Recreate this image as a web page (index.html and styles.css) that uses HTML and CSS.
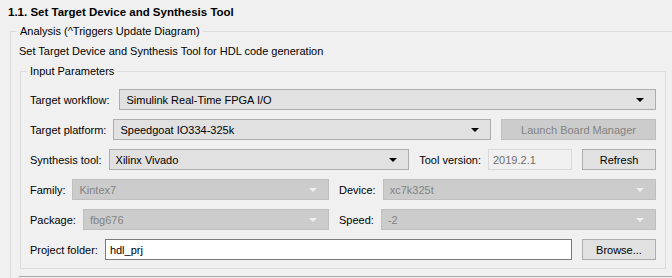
FILE: index.html
```html
<!DOCTYPE html>
<html>
<head>
<meta charset="utf-8">
<link rel="stylesheet" href="styles.css">
</head>
<body>
<div class="page">
  <div class="title">1.1. Set Target Device and Synthesis Tool</div>
  <fieldset class="group outer">
    <legend>Analysis (^Triggers Update Diagram)</legend>
    <div class="desc">Set Target Device and Synthesis Tool for HDL code generation</div>
    <fieldset class="group inner">
      <legend>Input Parameters</legend>
      <div class="rows">
        <div class="row">
          <span class="lbl wf">Target workflow:</span>
          <div class="select"><span class="val">Simulink Real-Time FPGA I/O</span><span class="arrow"></span></div>
        </div>
        <div class="row">
          <span class="lbl">Target platform:</span>
          <div class="select"><span class="val">Speedgoat IO334-325k</span><span class="arrow"></span></div>
          <div class="btn disabled launch">Launch Board Manager</div>
        </div>
        <div class="row">
          <span class="lbl">Synthesis tool:</span>
          <div class="select"><span class="val">Xilinx Vivado</span><span class="arrow"></span></div>
          <span class="lbl lbl-mid">Tool version:</span>
          <div class="input ro">2019.2.1</div>
          <div class="btn small">Refresh</div>
        </div>
        <div class="row split">
          <div class="half left">
            <span class="lbl">Family:</span>
            <div class="select disabled"><span class="val">Kintex7</span><span class="arrow"></span></div>
          </div>
          <div class="half right">
            <span class="lbl">Device:</span>
            <div class="select disabled"><span class="val">xc7k325t</span><span class="arrow"></span></div>
          </div>
        </div>
        <div class="row split">
          <div class="half left">
            <span class="lbl">Package:</span>
            <div class="select disabled"><span class="val">fbg676</span><span class="arrow"></span></div>
          </div>
          <div class="half right">
            <span class="lbl">Speed:</span>
            <div class="select disabled"><span class="val">-2</span><span class="arrow"></span></div>
          </div>
        </div>
        <div class="row">
          <span class="lbl">Project folder:</span>
          <div class="input edit">hdl_prj</div>
          <div class="btn small">Browse...</div>
        </div>
      </div>
    </fieldset>
    <div class="next-section"></div>
  </fieldset>
</div>
</body>
</html>
```
FILE: styles.css
```css
html, body {
  margin: 0;
  padding: 0;
  background: #f0f0f0;
  overflow: hidden;
}
body {
  font-family: "Liberation Sans", Arial, sans-serif;
  font-size: 11px;
  color: #000;
  width: 672px;
  height: 278px;
}
.page {
  padding: 5px 0 0 8px;
}
.title {
  font-weight: bold;
  font-size: 11.5px;
  height: 15px;
  line-height: 15px;
}
.group {
  border: 1px solid #dcdcdc;
  margin: 0;
  padding: 0;
  min-width: 0;
}
.group > legend {
  padding: 0 3px;
  margin-left: 6px;
  line-height: 14px;
}
.outer {
  margin: 4px -20px 0 2px;
  border-right: none;
  border-bottom: none;
  padding: 6px 0 0 0;
}
.desc {
  padding-left: 8px;
  line-height: 14px;
}
.inner {
  margin: 6px 6px 0 9px;
  width: 646px;
  box-sizing: border-box;
  padding: 11px 9px 8px 9px;
}
.inner > legend {
  margin-left: -3px;
}
.next-section {
  margin: 7px 0 0 8px;
  border-top: 1px solid #a9a9a9;
  height: 10px;
}
.rows {
  display: flex;
  flex-direction: column;
  gap: 9px;
}
.row {
  display: flex;
  align-items: center;
  height: 21px;
  gap: 10px;
}
.row > .lbl:first-child {
  margin-right: -3px;
}
.row > .lbl.wf {
  margin-right: 0;
}
.lbl {
  white-space: nowrap;
}
.lbl-mid {
  margin-right: -3px;
}
.select {
  flex: 1;
  height: 21px;
  box-sizing: border-box;
  border: 1px solid #adadad;
  background: #e1e1e1;
  display: flex;
  align-items: center;
  padding: 0 11px 0 6px;
}
.select .val {
  flex: 1;
  white-space: nowrap;
}
.arrow {
  width: 0;
  height: 0;
  border-left: 4px solid transparent;
  border-right: 4px solid transparent;
  border-top: 4px solid #000;
}
.select.disabled {
  background: #cccccc;
  border-color: #bfbfbf;
  color: #838383;
}
.select.disabled .arrow {
  border-top-color: #f0f0f0;
}
.btn {
  height: 21px;
  box-sizing: border-box;
  border: 1px solid #adadad;
  background: #e1e1e1;
  display: flex;
  align-items: center;
  justify-content: center;
  white-space: nowrap;
}
.btn.disabled {
  background: #cccccc;
  border-color: #bfbfbf;
  color: #838383;
}
.launch {
  width: 155px;
}
.small {
  width: 74px;
}
.input {
  height: 21px;
  box-sizing: border-box;
  display: flex;
  align-items: center;
  padding: 0 4px;
  white-space: nowrap;
}
.input.ro {
  width: 84px;
  border: 1px solid #d9d9d9;
  background: #f0f0f0;
  color: #6d6d6d;
}
.input.edit {
  flex: 1;
  border: 1px solid #7a7a7a;
  background: #fff;
}
.split {
  gap: 10px;
}
.half {
  display: flex;
  align-items: center;
  gap: 7px;
  height: 21px;
}
.half.left {
  width: 299px;
}
.half.right {
  flex: 1;
}
```
